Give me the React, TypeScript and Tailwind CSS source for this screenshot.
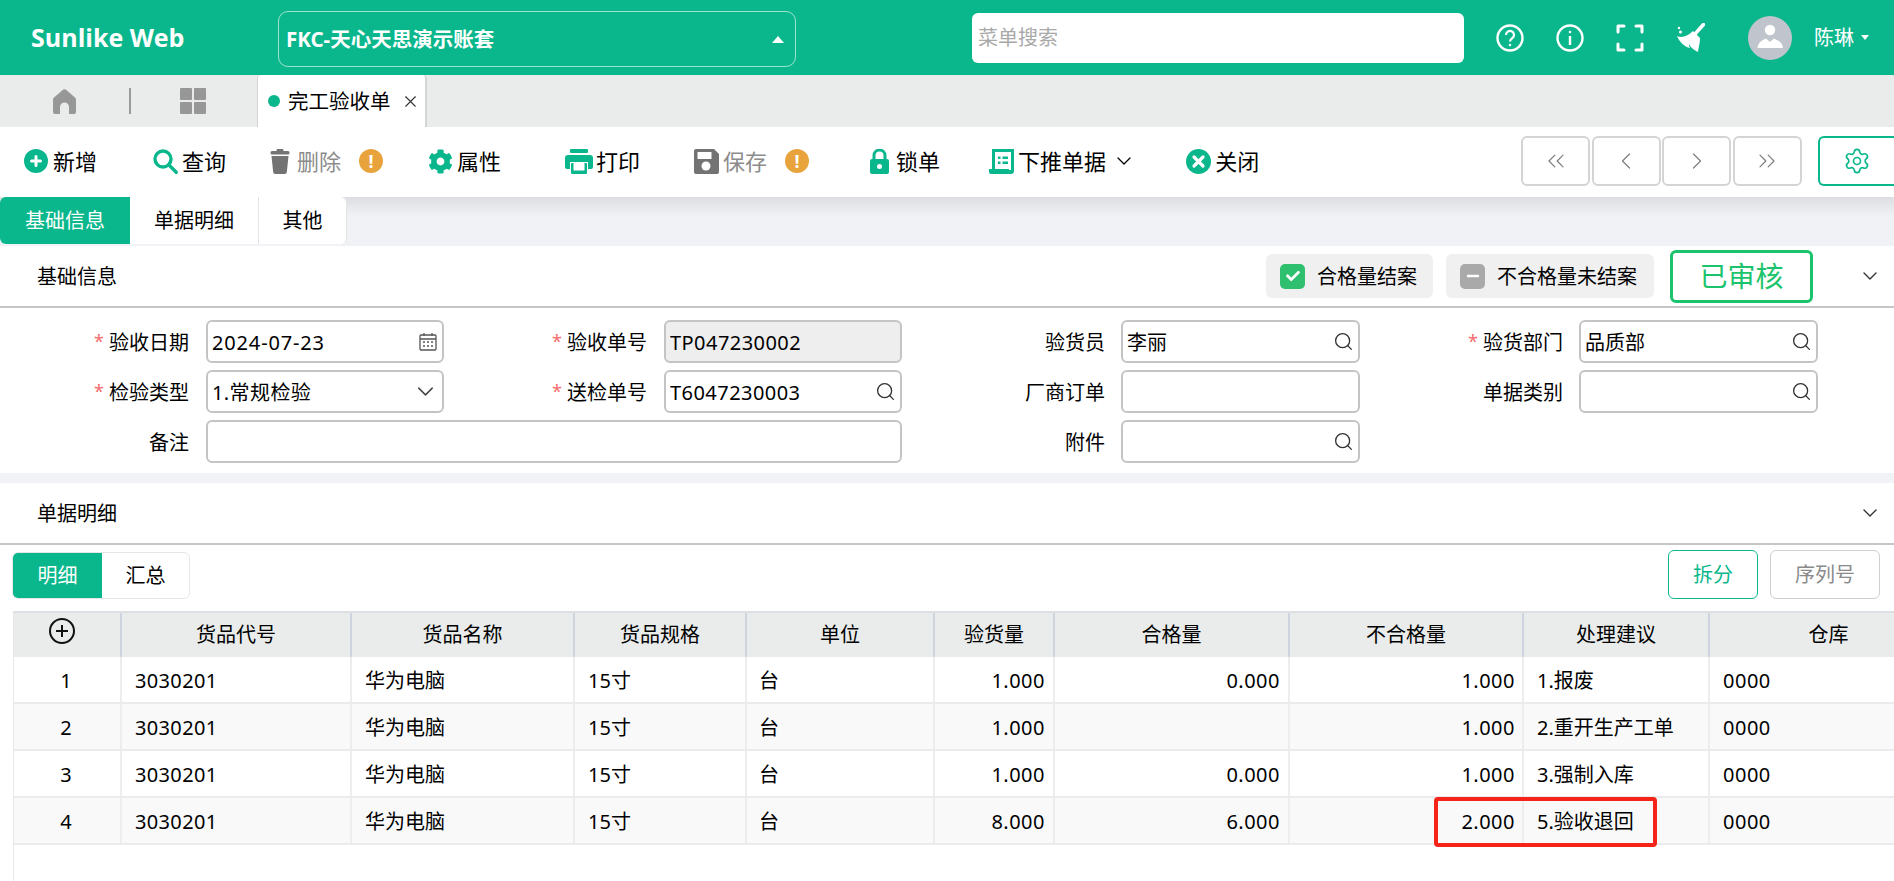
import React from "react";
import { ChevronDown, ChevronLeft, ChevronRight, ChevronsLeft, ChevronsRight, Search, Settings, X } from "lucide-react";
import { FaCog, FaCheck, FaMinus } from "react-icons/fa";

const T = "#0ab78c";
const G = "#737373";

const Warn = () => (
  <span className="w-6 h-6 rounded-full bg-[#e8a33d] text-white flex items-center justify-center text-[18px] font-bold ml-[18px]">!</span>
);

const Home = () => (
  <svg viewBox="0 0 23 25" className="w-[23px] h-[25px]" fill="#979797">
    <path d="M10.3.6a2 2 0 0 1 2.4 0L22 8.5a3 3 0 0 1 1 2.2V23a2 2 0 0 1-2 2h-5v-7a4.5 4.5 0 0 0-9 0v7H2a2 2 0 0 1-2-2V10.7a3 3 0 0 1 1-2.2Z" />
  </svg>
);

const GridIcon = () => (
  <svg viewBox="0 0 26 26" className="w-[26px] h-[26px]" fill="#979797">
    <rect x="0" y="0" width="12" height="12" rx="1" />
    <rect x="14" y="0" width="12" height="12" rx="1" />
    <rect x="0" y="14" width="12" height="12" rx="1" />
    <rect x="14" y="14" width="12" height="12" rx="1" />
  </svg>
);

const PlusIcon = () => (
  <svg viewBox="0 0 24 24" className="w-6 h-6 shrink-0">
    <circle cx="12" cy="12" r="12" fill={T} />
    <path d="M12 7.5v9M7.5 12h9" stroke="white" strokeWidth="3" strokeLinecap="round" />
  </svg>
);
const SearchIcon = () => (
  <svg viewBox="0 0 25 25" className="w-[25px] h-[25px] shrink-0" fill="none" stroke={T} strokeWidth="3.4" strokeLinecap="round">
    <circle cx="10" cy="10" r="8" />
    <path d="M16 16l7.2 7.2" />
  </svg>
);
const TrashIcon = () => (
  <svg viewBox="0 0 20 25" className="w-5 h-[25px] shrink-0" fill={G}>
    <rect x="6.5" y="0" width="7" height="2.5" rx="1" />
    <rect x="0.5" y="2" width="19" height="3.5" rx="1.5" />
    <path d="M1.5 7h17l-1.7 16.2a2 2 0 0 1-2 1.8H5.2a2 2 0 0 1-2-1.8Z" />
  </svg>
);
const PrintIcon = () => (
  <svg viewBox="0 0 28 25" className="w-7 h-[25px] shrink-0" fill={T}>
    <rect x="5" y="0" width="18" height="4" rx="1" />
    <path d="M3 6h22a3 3 0 0 1 3 3v9a2 2 0 0 1-2 2h-3v-7H5v7H2a2 2 0 0 1-2-2V9a3 3 0 0 1 3-3Z" />
    <rect x="6" y="14" width="16" height="11" rx="1" />
    <rect x="8.5" y="14" width="11" height="7.5" fill="white" />
  </svg>
);
const SaveIcon = () => (
  <svg viewBox="0 0 25 25" className="w-[25px] h-[25px] shrink-0">
    <path d="M2 0h18l5 5v18a2 2 0 0 1-2 2H2a2 2 0 0 1-2-2V2a2 2 0 0 1 2-2Z" fill={G} />
    <rect x="3.5" y="3" width="14" height="7" rx="0.5" fill="white" />
    <circle cx="12" cy="17" r="4.5" fill="white" />
  </svg>
);
const LockIcon = () => (
  <svg viewBox="0 0 19 25" className="w-[19px] h-[25px] shrink-0">
    <path d="M4 11V6.5a5.5 5.5 0 0 1 11 0V11" fill="none" stroke={T} strokeWidth="3" />
    <rect x="0" y="10" width="19" height="15" rx="2" fill={T} />
    <circle cx="9.5" cy="17.5" r="2.5" fill="white" />
  </svg>
);
const PushIcon = () => (
  <svg viewBox="0 0 25 25" className="w-[25px] h-[25px] shrink-0">
    <path d="M3 0h22v22a3 3 0 0 1-3 3H2a2 2 0 0 1-2-2v-3h3Z" fill={T} />
    <path d="M6 3h16v18h-2v-1H6Z" fill="white" />
    <path d="M9 7.5h2.5V10H9ZM13.5 7.5H19V10h-5.500ZM9 12.5h2.5V15H9ZM13.5 12.5H19V15h-5.500Z" fill={T} />
  </svg>
);
const CloseIcon = () => (
  <svg viewBox="0 0 25 25" className="w-[25px] h-[25px] shrink-0">
    <circle cx="12.5" cy="12.5" r="12.5" fill={T} />
    <path d="M8 8l9 9M17 8l-9 9" stroke="white" strokeWidth="3.2" strokeLinecap="round" />
  </svg>
);
const Broom = () => (
  <svg viewBox="0 0 28 29" className="ml-[33px] w-7 h-[29px]" fill="white">
    <path d="M26.5 1.5L18 11" stroke="white" strokeWidth="3.5" strokeLinecap="round" />
    <path d="M16 8l7 7c0 6-2 11-2 14-4-2-7-4-9-8 0 2 .5 3 1 4-5-1-10-5-13-12 4 2 10 1 16-5Z" />
    <circle cx="2" cy="5" r="1.2" />
    <circle cx="3.5" cy="9" r="1.5" />
  </svg>
);
const Avatar = () => (
  <svg viewBox="0 0 44 44" className="ml-[43px] w-11 h-11">
    <circle cx="22" cy="22" r="22" fill="#c0c4cc" />
    <circle cx="22" cy="14" r="5.2" fill="white" />
    <path d="M9.5 32c.5-6 5.5-8 8.5-9.5l4 3.5 4-3.500c3 1.500 8.500 3.500 9 9.500Z" fill="white" />
  </svg>
);

const toolbar = [
  { label: "新增", icon: <PlusIcon />, cls: "ml-[24px] text-black" },
  { label: "查询", icon: <SearchIcon />, cls: "ml-[56px] text-black" },
  { label: "删除", icon: <TrashIcon />, cls: "ml-[42px] text-[#8c8c8c]", warn: true },
  { label: "属性", icon: <FaCog className="w-[25px] h-[25px] shrink-0 text-[#0ab78c]" />, cls: "ml-[45px] text-black" },
  { label: "打印", icon: <PrintIcon />, cls: "ml-[66px] text-black" },
  { label: "保存", icon: <SaveIcon />, cls: "ml-[54px] text-[#8c8c8c]", warn: true },
  { label: "锁单", icon: <LockIcon />, cls: "ml-[58px] text-black" },
  { label: "下推单据", icon: <PushIcon />, cls: "ml-[49px] text-black", caret: true },
  { label: "关闭", icon: <CloseIcon />, cls: "ml-[50px] text-black" },
];

const Field = ({ label, req, value, icon, span, disabled, track, wide }: { label?: string; req?: boolean; value?: string; icon?: "search" | "date" | "down"; span?: boolean; disabled?: boolean; track?: string; wide?: boolean }) => (
  <div className={span ? "flex items-center w-[916px]" : "flex items-center w-[458px]"}>
    <div className="w-[190px] pr-[1px] flex justify-end items-center text-[20px] text-black leading-none pt-[2px]">
      {req && <span className="text-[#f56c6c] text-[18px] mr-[5px] -mt-1">*</span>}
      {label}
    </div>
    <div className={`${span ? "w-[696px] ml-[16px]" : wide ? "w-[239px] ml-[15px]" : "w-[238px] ml-[16px]"} h-[43px] border-2 border-[#c4c4c4] rounded-[6px] flex items-center px-[4px] text-[20px] ${disabled ? "bg-[#eeeeee]" : "bg-white"}`}>
      <span className={`flex-1 truncate pt-[2px] ${track ?? ""}`}>{value}</span>
      {icon === "search" && <Search className="w-[21px] h-[21px] text-[#333] shrink-0" strokeWidth={1.5} />}
      {icon === "down" && <ChevronDown className="w-[27px] h-[27px] text-[#444] shrink-0 -mr-[1px]" strokeWidth={1.3} />}
      {icon === "date" && (
        <svg viewBox="0 0 20 20" className="w-5 h-5 shrink-0" fill="none" stroke="#555" strokeWidth="1.3">
          <rect x="2" y="3" width="16" height="15" rx="1" />
          <path d="M2 7 H18 M6 1 V4 M14 1 V4" />
          <path d="M5 10 H7 M9 10 H11 M13 10 H15 M5 14 H7 M9 14 H11 M13 14 H15" strokeWidth="1.6" />
        </svg>
      )}
    </div>
  </div>
);

const headers = ["货品代号", "货品名称", "货品规格", "单位", "验货量", "合格量", "不合格量", "处理建议"];
const rows = [
  ["1", "1.000", "0.000", "1.000", "1.报废"],
  ["2", "1.000", "", "1.000", "2.重开生产工单"],
  ["3", "1.000", "0.000", "1.000", "3.强制入库"],
  ["4", "8.000", "6.000", "2.000", "5.验收退回"],
];

const Chevron = () => <ChevronDown className="w-6 h-6 text-[#333]" strokeWidth={1.4} />;

export default function App() {
  return (
    <div
      className="relative w-[1894px] h-[881px] overflow-hidden bg-[#f0f2f5] text-black text-[20px]"
      style={{ fontFamily: '"Noto Sans","Noto Sans CJK SC",sans-serif' }}
    >
      {/* Header */}
      <header className="h-[75px] bg-[#0ab78c] flex items-center text-white">
        <div className="ml-[31px] w-[247px] text-[25px] font-bold leading-none" style={{ fontFamily: '"Open Sans","Noto Sans CJK SC",sans-serif' }}>Sunlike Web</div>
        <div className="mt-[3px] w-[518px] h-[56px] border border-white/60 rounded-[10px] flex items-center pl-[7px] pr-[11px] font-bold text-[20.5px]">
          <span className="flex-1">FKC-天心天思演示账套</span>
          <span className="w-0 h-0 border-l-[6px] border-r-[6px] border-b-[7px] border-l-transparent border-r-transparent border-b-white" />
        </div>
        <div className="ml-[176px] w-[492px] h-[50px] bg-white rounded-[6px] flex items-center pl-[6px] pt-[1px] text-[20px] text-[#a9a9a9]">菜单搜索</div>
        <svg viewBox="0 0 28 28" className="ml-[32px] w-7 h-7" fill="none" stroke="white" strokeWidth="2.4">
          <circle cx="14" cy="14" r="12.5" />
          <path d="M10 11a4 4 0 1 1 6.5 3c-1.5 1-2.5 1.8-2.5 3.5" strokeWidth="2.2" />
          <circle cx="14" cy="21" r="0.9" fill="white" strokeWidth="1" />
        </svg>
        <svg viewBox="0 0 28 28" className="ml-[32px] w-7 h-7" fill="none" stroke="white" strokeWidth="2.4">
          <circle cx="14" cy="14" r="12.5" />
          <path d="M14 12V21" />
          <circle cx="14" cy="8" r="0.9" fill="white" strokeWidth="1" />
        </svg>
        <svg viewBox="0 0 28 28" className="ml-[32px] w-7 h-7" fill="none" stroke="white" strokeWidth="3" strokeLinecap="round" strokeLinejoin="round">
          <path d="M8 2H2V8M20 2H26V8M2 20V26H8M26 20V26H20" />
        </svg>
        <Broom />
        <Avatar />
        <span className="ml-[22px] text-[20px] pt-[1px]">陈琳</span>
        <span className="ml-[7px] w-0 h-0 border-l-[4px] border-r-[4px] border-t-[5px] border-l-transparent border-r-transparent border-t-white" />
      </header>

      {/* Tab bar */}
      <div className="h-[52px] bg-[#e9eceb] flex items-center">
        <div className="ml-[53px] flex"><Home /></div>
        <div className="ml-[53px] w-[2px] h-[26px] bg-[#9a9a9a]" />
        <div className="ml-[49px] flex"><GridIcon /></div>
        <div className="ml-[51px] w-[170px] h-full bg-white border-l border-r-2 border-[#d5d5d5] rounded-t-[4px] flex items-center pl-[10px]">
          <span className="w-3 h-3 rounded-full bg-[#0ab78c]" />
          <span className="ml-[8px] text-[20.5px]">完工验收单</span>
          <X className="ml-[10px] w-[19px] h-[19px] text-[#333]" strokeWidth={1.4} />
        </div>
      </div>

      {/* Toolbar */}
      <div className="h-[70px] pb-[2px] bg-white flex items-center text-[22px]">
        {toolbar.map((t) => (
          <div key={t.label} className={`flex items-center ${t.cls}`}>
            <span className="w-6 flex justify-center shrink-0">{t.icon}</span>
            <span className="ml-[5px] leading-none">{t.label}</span>
            {t.warn && <Warn />}
            {t.caret && <ChevronDown className="ml-[6px] w-[24px] h-[24px]" strokeWidth={1.3} />}
          </div>
        ))}
        <div className="ml-auto flex items-center h-[50px] gap-[1.5px]">
          {[ChevronsLeft, ChevronLeft, ChevronRight, ChevronsRight].map((I, i) => (
            <div key={i} className="w-[69px] h-[50px] border-2 border-[#d4d4d4] rounded-[6px] flex items-center justify-center">
              <I className="w-7 h-7 text-[#808080]" strokeWidth={1.1} />
            </div>
          ))}
          <div className="ml-[15px] w-[76px] h-[50px] border-2 border-r-0 border-[#0ab78c] rounded-l-[6px] flex items-center justify-center">
            <Settings className="w-7 h-7 text-[#0ab78c]" strokeWidth={1.4} />
          </div>
        </div>
      </div>

      {/* Strip */}
      <div className="h-[49px] bg-gradient-to-b from-[#dcdee2] to-[#f0f2f5] to-40% flex items-start">
        <div className="w-[130px] h-[47px] bg-[#0ab78c] text-white rounded-l-[6px] flex items-center justify-center">基础信息</div>
        <div className="w-[129px] h-[47px] bg-white border-r border-[#e4e4e4] flex items-center justify-center">单据明细</div>
        <div className="w-[88px] h-[47px] bg-white rounded-r-[6px] border-r border-[#e4e4e4] flex items-center justify-center">其他</div>
      </div>

      {/* Section 1 */}
      <section className="bg-white h-[227px]">
        <div className="h-[62px] border-b-2 border-[#c6c6c6] flex items-center pl-[37px]">
          <span className="pt-[2px]">基础信息</span>
          <div className="ml-auto flex items-center">
            <div className="w-[167px] h-[44px] rounded-[6px] bg-[#f0f0f0] flex items-center pl-[14px]">
              <span className="w-[25px] h-[25px] rounded-[5px] bg-[#2fc06f] flex items-center justify-center"><FaCheck className="w-[14px] h-[14px] text-white" /></span>
              <span className="ml-[12px] pt-[2px]">合格量结案</span>
            </div>
            <div className="ml-[13px] w-[208px] h-[44px] rounded-[6px] bg-[#f0f0f0] flex items-center pl-[14px]">
              <span className="w-[25px] h-[25px] rounded-[5px] bg-[#a9a9a9] flex items-center justify-center"><FaMinus className="w-[14px] h-[14px] text-white" /></span>
              <span className="ml-[12px] whitespace-nowrap pt-[2px]">不合格量未结案</span>
            </div>
            <div className="ml-[16px] w-[143px] h-[53px] border-[3px] border-[#1bc46c] rounded-[6px] text-[#1bc46c] text-[28px] flex items-center justify-center">已审核</div>
            <div className="ml-[45px] mr-[12px]"><Chevron /></div>
          </div>
        </div>
        <div className="pt-[12px] flex flex-col gap-[7px]">
          <div className="flex">
            <Field label="验收日期" req value="2024-07-23" icon="date" track="tracking-[0.85px]" />
            <Field label="验收单号" req value="TP047230002" disabled track="tracking-[0.45px]" />
            <Field label="验货员" value="李丽" icon="search" wide />
            <Field label="验货部门" req value="品质部" icon="search" wide />
          </div>
          <div className="flex">
            <Field label="检验类型" req value="1.常规检验" icon="down" track="tracking-[0.4px]" />
            <Field label="送检单号" req value="T6047230003" icon="search" track="tracking-[0.45px]" />
            <Field label="厂商订单" wide />
            <Field label="单据类别" icon="search" wide />
          </div>
          <div className="flex">
            <Field label="备注" span />
            <Field label="附件" icon="search" wide />
          </div>
        </div>
      </section>

      {/* Section 2 */}
      <section className="mt-[10px] bg-white h-[398px]">
        <div className="h-[62px] border-b-2 border-[#c6c6c6] flex items-center pl-[37px] pr-[12px]">
          <span className="flex-1 pt-[2px]">单据明细</span>
          <Chevron />
        </div>
        <div className="h-[66px] flex items-start pt-[7px] pl-[12px] pr-[14px]">
          <div className="w-[178px] h-[47px] rounded-[6px] border border-[#e6e6e6] flex overflow-hidden">
            <div className="w-[89px] bg-[#0ab78c] text-white flex items-center justify-center">明细</div>
            <div className="flex-1 flex items-center justify-center">汇总</div>
          </div>
          <div className="ml-auto flex gap-[12px] -mt-[2px]">
            <div className="w-[90px] h-[49px] border border-[#0ab78c] rounded-[6px] text-[#0ab78c] flex items-center justify-center">拆分</div>
            <div className="w-[110px] h-[49px] border border-[#cfcfcf] rounded-[6px] text-[#8a8a8a] flex items-center justify-center">序列号</div>
          </div>
        </div>
        <div className="ml-[13px] border-l border-[#e9e9e9] h-[270px]">
          <div className="grid grid-cols-[108px_230px_223px_172px_188px_120px_235px_234px_186px_185px] h-[46px] bg-[#e9eceb] border-t-2 border-[#dcdfe3]">
            <div className="border-r-2 border-[#d0d4de] flex justify-center pt-[5px]">
              <svg viewBox="0 0 26 26" className="w-[26px] h-[26px] -ml-[10px]" fill="none" stroke="#111" strokeWidth="2">
                <circle cx="13" cy="13" r="12" />
                <path d="M13 7V19M7 13H19" />
              </svg>
            </div>
            {headers.map((h) => (
              <div key={h} className="border-r-2 border-[#d0d4de] flex items-center justify-center">{h}</div>
            ))}
            <div className="flex items-center justify-center pl-[52px]">仓库</div>
          </div>
          {rows.map((r, i) => (
            <div key={r[0]} className={`grid grid-cols-[108px_230px_223px_172px_188px_120px_235px_234px_186px_185px] h-[47px] border-b-2 border-[#e9ebec] ${i % 2 ? "bg-[#f9f9f9]" : "bg-white"}`}>
              <div className="border-r-2 border-[#eceded] flex items-center justify-center pt-[2px] pr-[2px]">{r[0]}</div>
              <div className="border-r-2 border-[#eceded] flex items-center pl-[13px] pt-[2px] tracking-[0.35px]">3030201</div>
              <div className="border-r-2 border-[#eceded] flex items-center pl-[13px] pt-[2px]">华为电脑</div>
              <div className="border-r-2 border-[#eceded] flex items-center pl-[13px] pt-[2px]">15寸</div>
              <div className="border-r-2 border-[#eceded] flex items-center pl-[12px] pt-[2px]">台</div>
              <div className="border-r-2 border-[#eceded] flex items-center justify-end pr-[8px] pt-[2px] tracking-[0.5px]">{r[1]}</div>
              <div className="border-r-2 border-[#eceded] flex items-center justify-end pr-[8px] pt-[2px] tracking-[0.5px]">{r[2]}</div>
              <div className="border-r-2 border-[#eceded] flex items-center justify-end pr-[7px] pt-[2px] tracking-[0.5px]">{r[3]}</div>
              <div className="border-r-2 border-[#eceded] flex items-center pl-[13px] pt-[2px] whitespace-nowrap">{r[4]}</div>
              <div className="flex items-center pl-[13px] pt-[2px] tracking-[0.5px]">0000</div>
            </div>
          ))}
        </div>
      </section>

      {/* Annotation */}
      <div className="absolute left-[1434px] top-[797px] w-[223px] h-[50px] border-[4px] border-[#f52318] rounded-[4px]" />
    </div>
  );
}
